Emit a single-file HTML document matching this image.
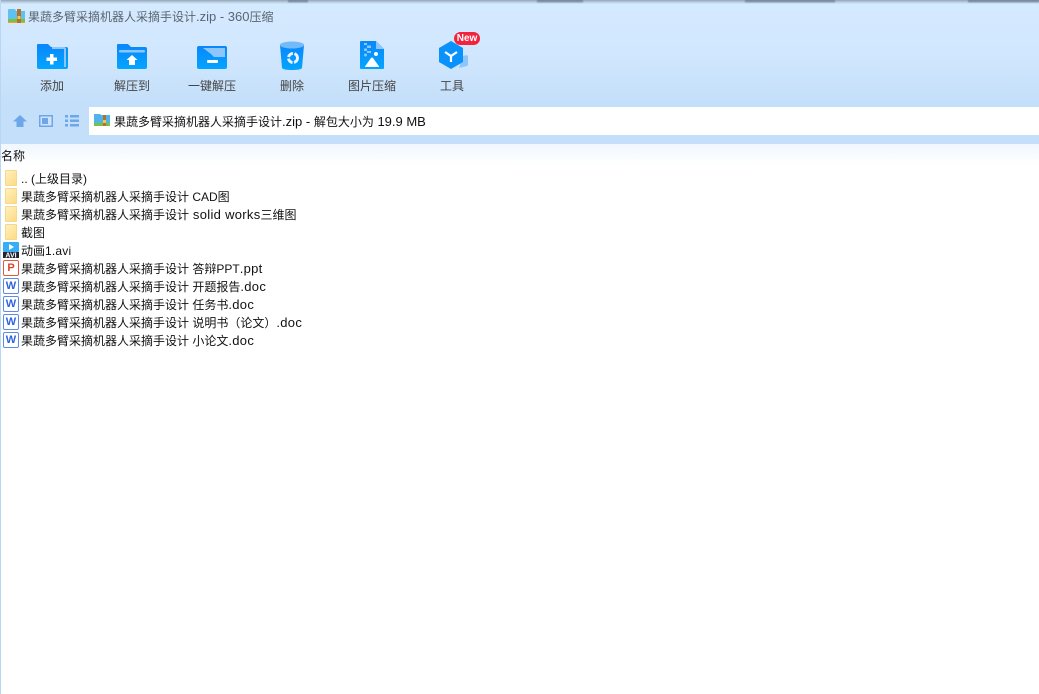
<!DOCTYPE html>
<html lang="zh"><head><meta charset="utf-8">
<style>
html,body{margin:0;padding:0;background:#fff}
body{width:1039px;height:694px;position:relative;overflow:hidden;font:12px/18px "Liberation Sans","Noto Sans CJK SC",sans-serif;color:#111}
.a{position:absolute}
.e{font-size:13px;letter-spacing:.3px}
.n{font-size:13px}
#hdr{left:0;top:0;width:1039px;height:106px;background:linear-gradient(#d5eaff,#d1e7fe 50%,#c3dff9)}
#top{left:0;top:0;width:1039px;height:4px;background:linear-gradient(#93a5b6,#b8ccdf 50%,#d3e8fd)}
.d{top:0;height:3px;background:linear-gradient(#5f7183,#8a9eb1 60%,rgba(180,200,220,0));filter:blur(.6px)}
#bar{left:0;top:106px;width:1039px;height:38px;background:#c3dff9}
#addr{left:89px;top:107px;width:950px;height:28px;background:#fff}
#fade{left:1px;top:144px;width:1038px;height:21px;background:linear-gradient(#eff7fe,#fff)}
#lb{left:0;top:0;width:1px;height:694px;background:#b9d7f5}
.l{top:77px;width:80px;text-align:center;color:#444;line-height:18px}
.t{left:21px;white-space:nowrap;color:#111}
svg{position:absolute;overflow:visible}
.f{left:5px;width:12px;height:16px;background:linear-gradient(135deg,#fff0bd,#fedb85);border:1px solid #f5d88c;box-sizing:border-box;border-radius:1px}
.i{left:3px;width:16px;height:16px;box-sizing:border-box;background:#fff;border-radius:2px;font:bold 11px/14px "Liberation Sans",sans-serif;text-align:center}
.w{border:1.5px solid #5f8be8;color:#2f63dd}
.p{border:1.5px solid #e2573d;color:#d8452b}
</style></head><body>
<div class="a" id="hdr"></div>
<div class="a" id="top"></div>
<div class="a d" style="left:288px;width:20px"></div>
<div class="a d" style="left:537px;width:46px"></div>
<div class="a d" style="left:745px;width:90px"></div>
<div class="a d" style="left:968px;width:71px"></div>
<div class="a" id="bar"></div>
<div class="a" id="addr"></div>
<div class="a" id="fade"></div>
<div class="a" id="lb"></div>

<svg style="left:8px;top:9px" width="17" height="14" viewBox="0 0 17 14"><path d="M0 1a1 1 0 0 1 1-1h6l1 2h9v12H0z" fill="#5fc0f2"/><rect y="10" width="17" height="3" fill="#7cc043"/><rect y="13" width="17" height="1" fill="#f0a030"/><rect x="9" y="0" width="4" height="14" fill="#b5722a"/><rect x="9.500" y="7" width="3" height="3" fill="#f5c84a"/></svg>
<div class="a" style="left:28px;top:8px;color:#5a6570;white-space:nowrap">果蔬多臂采摘机器人采摘手设计<span class="n">.zip - 360</span>压缩</div>

<svg style="left:37px;top:44px" width="31" height="25" viewBox="0 0 31 25"><defs><linearGradient id="g" x1="0" y1="0" x2="0" y2="1"><stop offset="0" stop-color="#0a86fb"/><stop offset="1" stop-color="#03a5ff"/></linearGradient></defs><path d="M1 0h10l3 3h15a2 2 0 0 1 2 2v18a2 2 0 0 1-2 2H2a2 2 0 0 1-2-2V1a1 1 0 0 1 1-1z" fill="url(#g)"/><path d="M15 4h12a1 1 0 0 1 1 1v18" fill="none" stroke="#8cc6fd" stroke-width="2"/><path d="M13 10h3.500v3.500H20v3.500h-3.500v3.500H13V17H9.500v-3.500H13z" fill="#fff"/></svg>
<div class="a l" style="left:12px">添加</div>

<svg style="left:117px;top:44px" width="30" height="25" viewBox="0 0 30 25"><path d="M1 0h10l3 3h14a2 2 0 0 1 2 2v18a2 2 0 0 1-2 2H2a2 2 0 0 1-2-2V1a1 1 0 0 1 1-1z" fill="url(#g)"/><rect x="2" y="6" width="26" height="2.500" rx="1" fill="#8cc6fd"/><path d="M15 11l5.500 5H18v5h-6v-5H9.500z" fill="#fff"/></svg>
<div class="a l" style="left:92px">解压到</div>

<svg style="left:197px;top:46px" width="30" height="23" viewBox="0 0 30 23"><rect width="30" height="23" rx="2" fill="url(#g)"/><path d="M6 2h22v9H17l-3-3z" fill="#8cc6fd"/><rect x="10" y="14" width="11" height="3" rx="1" fill="#fff"/></svg>
<div class="a l" style="left:172px">一键解压</div>

<svg style="left:280px;top:41px" width="24" height="29" viewBox="0 0 24 29"><path d="M0 4l2 23c1 1.500 5 2 10 2s9-.5 10-2l2-23z" fill="url(#g)"/><ellipse cx="12" cy="4" rx="12" ry="3.500" fill="#72baf8"/><circle cx="13" cy="17" r="4.500" fill="none" stroke="#e8f4ff" stroke-width="3" stroke-dasharray="6 1.500"/></svg>
<div class="a l" style="left:252px">删除</div>

<svg style="left:360px;top:41px" width="24" height="28" viewBox="0 0 24 28"><path d="M1 0h15l8 8v19a1 1 0 0 1-1 1H1a1 1 0 0 1-1-1V1a1 1 0 0 1 1-1z" fill="url(#g)"/><path d="M16 0l8 8h-8z" fill="#8cc6fd"/><path d="M4 2h3v2H4zM7 4.500h4v2.500H7zM4 7.500h3v2.500H4zM7 10h4v2H7z" fill="#8cc6fd"/><circle cx="5.500" cy="14" r="1.500" fill="#8cc6fd"/><circle cx="16" cy="13" r="2" fill="#fff"/><path d="M5 26q0-1 1-2l5-7q1-1 2 0l5 7q1 1 1 2z" fill="#fff"/></svg>
<div class="a l" style="left:332px">图片压缩</div>

<svg style="left:439px;top:41px" width="30" height="28" viewBox="0 0 30 28"><path d="M24 15l4-1 1 1v9l-1 1-8 2z" fill="#8cc6fd"/><path d="M12 0l12 7v14l-12 7-12-7V7z" fill="#0a92fc"/><path d="M6 11l6 4 6-4M12 15v6" fill="none" stroke="#fff" stroke-width="2.200"/></svg>
<div class="a" style="left:454px;top:32px;width:26px;height:13px;border-radius:7px;background:#f2233c;color:#fff;font:bold 10px/13px 'Liberation Sans',sans-serif;text-align:center">New</div>
<div class="a l" style="left:412px">工具</div>

<svg style="left:13px;top:115px" width="14" height="12" viewBox="0 0 14 12"><path d="M7 0l7 6.500h-3.500V12h-7V6.500H0z" fill="#6ea6ea"/></svg>
<svg style="left:39px;top:115px" width="14" height="12" viewBox="0 0 14 12"><rect x=".75" y=".75" width="12.500" height="10.500" fill="#cfe4fa" stroke="#6ea6ea" stroke-width="1.500"/><rect x="3" y="3" width="6" height="6" fill="#6ea6ea"/></svg>
<svg style="left:65px;top:115px" width="14" height="12" viewBox="0 0 14 12"><path d="M0 0h3v2.500H0zM5 0h9v2.500H5zM0 4.500h3V7H0zM5 4.500h9V7H5zM0 9h3v2.500H0zM5 9h9v2.500H5z" fill="#6ea6ea"/></svg>

<svg style="left:94px;top:113px" width="16" height="15" viewBox="0 0 16 15"><path d="M0 1h6l1 1h9v11H0z" fill="#4fb3ee"/><rect y="10" width="16" height="3" fill="#7cc043"/><rect x="9" y="2" width="3" height="11" fill="#b5722a"/><rect x="9" y="7" width="3" height="3" fill="#f5c84a"/></svg>
<div class="a" style="left:114px;top:113px;white-space:nowrap;color:#111">果蔬多臂采摘机器人采摘手设计<span class="n">.zip - </span>解包大小为<span class="n"> 19.9 MB</span></div>

<div class="a" style="left:1px;top:147px;color:#111">名称</div>

<div class="a f" style="top:170px"></div><div class="a t" style="top:170px">.. (上级目录)</div>
<div class="a f" style="top:188px"></div><div class="a t" style="top:188px">果蔬多臂采摘机器人采摘手设计 CAD图</div>
<div class="a f" style="top:206px"></div><div class="a t" style="top:206px">果蔬多臂采摘机器人采摘手设计<span class="e"> solid works</span>三维图</div>
<div class="a f" style="top:224px"></div><div class="a t" style="top:224px">截图</div>
<svg style="left:3px;top:242px" width="16" height="16" viewBox="0 0 16 16"><rect width="16" height="10" rx="1" fill="#35aef5"/><path d="M6 2l5 3-5 3z" fill="#fff"/><rect y="10" width="16" height="6" fill="#223"/><text x="8" y="15.500" font-family="Liberation Sans" font-size="7" font-weight="bold" fill="#fff" text-anchor="middle">AVI</text></svg>
<div class="a t" style="top:242px">动画<span style="letter-spacing:.2px">1.avi</span></div>
<div class="a i p" style="top:260px">P</div><div class="a t" style="top:260px">果蔬多臂采摘机器人采摘手设计 答辩PPT<span class="e">.ppt</span></div>
<div class="a i w" style="top:278px">W</div><div class="a t" style="top:278px">果蔬多臂采摘机器人采摘手设计 开题报告<span class="e">.doc</span></div>
<div class="a i w" style="top:296px">W</div><div class="a t" style="top:296px">果蔬多臂采摘机器人采摘手设计 任务书<span class="e">.doc</span></div>
<div class="a i w" style="top:314px">W</div><div class="a t" style="top:314px">果蔬多臂采摘机器人采摘手设计 说明书（论文）<span class="e">.doc</span></div>
<div class="a i w" style="top:332px">W</div><div class="a t" style="top:332px">果蔬多臂采摘机器人采摘手设计 小论文<span class="e">.doc</span></div>
</body></html>
